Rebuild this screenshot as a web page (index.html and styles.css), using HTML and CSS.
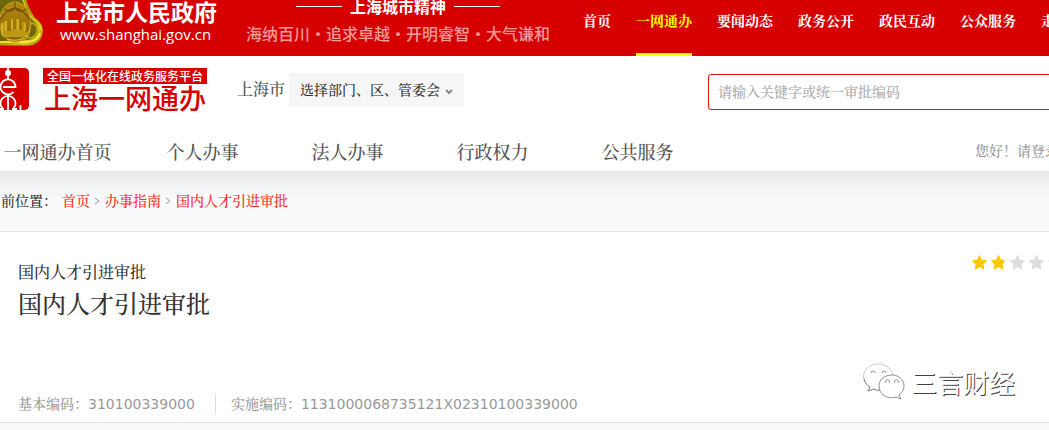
FILE: index.html
```html
<!DOCTYPE html>
<html lang="zh-CN">
<head>
<meta charset="utf-8">
<meta name="viewport" content="width=device-width, initial-scale=1">
<title>国内人才引进审批 - 上海一网通办</title>
<link rel="stylesheet" href="styles.css">
</head>
<body>
<header class="topbar">
  <svg class="emblem" viewBox="0 0 44 48" aria-hidden="true">
    <defs>
      <linearGradient id="gold" x1="0" y1="0" x2="1" y2="1"><stop offset="0" stop-color="#c8b00a"/><stop offset=".5" stop-color="#a88a08"/><stop offset=".8" stop-color="#d8c81c"/><stop offset="1" stop-color="#8d6f05"/></linearGradient>
      <linearGradient id="bronze" x1="0" y1="0" x2="0" y2="1"><stop offset="0" stop-color="#b58a10"/><stop offset="1" stop-color="#8e6404"/></linearGradient>
    </defs>
    <path d="M-5 -5 L25 -5 C27 3 31 12 35 18 C41 22 44 28 42.500 34 C41 41 36 45.500 28 45.500 L-5 45.500Z" fill="url(#gold)"/>
    <path d="M-2 -2 L21 -3 C24 5 28 14 33 21 C37 24 38 27 38 31 C37 36 33 39 28 40 L-2 41Z" fill="#6f6608"/>
    <path d="M23 -1 C25 7 29 15 34 20 C38 22 41 26 41 30" fill="none" stroke="#d9cb25" stroke-width="1.500"/>
    <path d="M19 42 C30 42 38 42 40 33" fill="none" stroke="#f4ec3a" stroke-width="2"/>
    <path d="M31 23 C29 29 31 35 24 40 M31 23 Q38 24 37 31 Q36 38 28 38" fill="none" stroke="#c4b01a" stroke-width="1.500"/>
    <path d="M-2 42 H19" stroke="#e8dc30" stroke-width="2"/>
    <ellipse cx="15" cy="22" rx="15.500" ry="20" fill="url(#bronze)" stroke="#c9a51a"/>
    <path d="M0 20 Q6 10 15 8 Q24 10 30 20 M4 9 Q10 14 15 8 Q20 14 26 9 M15 2V8" fill="none" stroke="#74550a" stroke-width="1.300"/>
    <path d="M1 35V23h3v-2h3v10h4V20l2-1v10h3V19h3v11h3V22h3v10h4v3Z" fill="#bd980e"/>
    <path d="M2 34V23M6 31V21M12 29V19M18 30V19M25 31V23M2 36H28M7 39Q16 42 24 38" fill="none" stroke="#e2ca38"/>
  </svg>
  <a class="gov" href="#"><span class="gov-name">上海市人民政府</span><span class="gov-url">www.shanghai.gov.cn</span></a>
  <div class="spirit">
    <div class="spirit-title">上海城市精神</div>
    <div class="spirit-text">海纳百川·追求卓越·开明睿智·大气谦和</div>
  </div>
  <nav class="site-nav">
    <a href="#">首页</a><a class="current" href="#">一网通办</a><a href="#">要闻动态</a><a href="#">政务公开</a><a href="#">政民互动</a><a href="#">公众服务</a><a href="#">走进上海</a>
  </nav>
</header>
<section class="masthead">
  <div class="tools">
    <a class="brand" href="#">
      <svg class="brand-mark" viewBox="0 0 29 42" aria-hidden="true">
        <path d="M-3 0H24Q29 0 29 5V37Q29 42 24 42H-3Z" fill="#d70000"/>
        <g fill="none" stroke="#fff" stroke-width="1.800">
          <path d="M8 0V11"/>
          <path d="M3 19H15.500A7.500 7.500 0 1 0 13.500 24"/>
          <path d="M3 41A7.500 7.500 0 1 1 13 41M8 27V42M-1 41H4M12 41H17M20.500 37V42"/>
        </g>
        <circle cx="8" cy="5" r="3" fill="#fff"/>
      </svg>
      <span class="brand-words"><span class="brand-tag">全国一体化在线政务服务平台</span><span class="brand-name">上海一网通办</span></span>
    </a>
    <label class="city" for="dept">上海市</label>
    <div class="picker">
      <select id="dept"><option>选择部门、区、管委会</option></select>
      <svg class="chevron" viewBox="0 0 8 6" aria-hidden="true"><path d="M1 1L4 4L7 1" fill="none" stroke="#888" stroke-width="2"/></svg>
    </div>
    <form class="search"><input type="text" aria-label="搜索" placeholder="请输入关键字或统一审批编码"></form>
  </div>
  <div class="menu-row">
    <nav class="menu"><a href="#">一网通办首页</a><a href="#">个人办事</a><a href="#">法人办事</a><a href="#">行政权力</a><a href="#">公共服务</a></nav>
    <a class="login" href="#">您好！请登录</a>
  </div>
</section>
<main>
  <nav class="crumbs" aria-label="当前位置">
    <span class="crumbs-label">前位置：</span>
    <a href="#">首页</a>
    <svg viewBox="0 0 6 8" aria-hidden="true"><path d="M1 1L5 4L1 7"/></svg>
    <a href="#">办事指南</a>
    <svg viewBox="0 0 6 8" aria-hidden="true"><path d="M1 1L5 4L1 7"/></svg>
    <a href="#">国内人才引进审批</a>
  </nav>
  <article class="card">
    <div class="card-head">
      <div>
        <p class="kind">国内人才引进审批</p>
        <h1>国内人才引进审批</h1>
      </div>
      <svg class="stars" viewBox="0 0 91 15" role="img" aria-label="评分">
        <defs>
          <path id="star" d="M7.500 1L9.500 5.300L14 5.900L10.700 9L11.600 13.700L7.500 11.500L3.400 13.700L4.300 9L1 5.900L5.500 5.300Z" stroke-width="1.400" stroke-linejoin="round"/>
          <clipPath id="part"><rect width="32" height="15"/></clipPath>
        </defs>
        <g fill="#ddd" stroke="#ddd"><use href="#star" x="19"/><use href="#star" x="38"/><use href="#star" x="57"/><use href="#star" x="76"/></g>
        <g fill="#ffc800" stroke="#ffc800" clip-path="url(#part)"><use href="#star"/><use href="#star" x="19"/></g>
      </svg>
    </div>
    <div class="codes">
      <span>基本编码：310100339000</span>
      <span>实施编码：1131000068735121X02310100339000</span>
    </div>
    <div class="watermark">
      <svg viewBox="0 0 42 38" aria-hidden="true">
        <g fill="#fff" stroke-width=".8">
          <path d="M5 28L7 24C-5 16 1 1 15 1C23 1 29 6 30 12C20 13 15 20 17 27Q14 28 11 26Z" stroke="#bbb"/>
          <path d="M1 16C2 20 4 22 7 24L5 28L11 26Q14 28 17 27" stroke="#666"/>
          <path d="M16 23C16 16 22 12 29 12C36 12 41 17 41 23C41 27 39 30 36 32L38 36L33 34C24 37 16 31 16 23Z" stroke="#777"/>
          <path d="M8 10a2 2 0 1 1 4 0M19 10a2 2 0 1 1 4 0M23 20a2 2 0 1 1 3 0M32 20a2 2 0 1 1 3 0" stroke="#777"/>
        </g>
      </svg>
      <span>三言财经</span>
    </div>
  </article>
</main>
</body>
</html>
```
FILE: styles.css
```css
* { box-sizing: border-box; }

body {
  margin: 0;
  overflow: hidden;
  background: #f8fafc;
  color: #333;
  font: 500 14px/20px "DejaVu Sans", "Songti SC", "Noto Serif CJK SC", "Noto Sans CJK SC", serif;
}

a { color: inherit; text-decoration: none; }
p, h1 { margin: 0; font-weight: 500; }

.topbar {
  display: flex;
  height: 56px;
  overflow: hidden;
  background: #d70000;
  color: #fff;
  white-space: nowrap;
}
.topbar > * { flex-shrink: 0; }

.emblem { width: 44px; height: 48px; }

.gov {
  display: flex;
  flex-direction: column;
  width: 190px;
  padding-left: 12px;
  font-family: "Noto Sans CJK SC", sans-serif;
}
.gov-name { font-size: 23px; font-weight: 700; line-height: 22px; }
.gov-url { font: 15px/20px "Open Sans", sans-serif; padding: 2px 0 0 4px; }

.spirit {
  width: 304px;
  margin-left: 12px;
  font: 500 16px/16px "Noto Sans CJK SC", sans-serif;
}
.spirit-title {
  display: flex;
  align-items: center;
  justify-content: center;
  gap: 8px;
  height: 12px;
  font-weight: 700;
}
.spirit-title::before, .spirit-title::after {
  content: "";
  width: 46px;
  height: 1px;
  background: #fff;
}
.spirit-text { margin-top: 13px; color: #f39a9a; }

.site-nav {
  display: flex;
  gap: 25px;
  margin-left: 33px;
  font-weight: 700;
}
.site-nav a { padding-top: 11px; }
.site-nav .current { color: #ff0; border-bottom: 3px solid #ff0; }

.masthead {
  background: #fff;
  white-space: nowrap;
}

.tools {
  display: flex;
  padding-top: 12px;
  height: 76px;
}
.tools > * { flex-shrink: 0; }

.brand { display: flex; gap: 14px; }
.brand-mark { width: 29px; height: 42px; }
.brand-words {
  display: flex;
  flex-direction: column;
  width: 164px;
  color: #d70000;
  font-family: "Noto Sans CJK SC", sans-serif;
}
.brand-tag {
  background: #d70000;
  color: #fff;
  font-size: 12px;
  font-weight: 500;
  line-height: 16px;
  text-align: center;
}
.brand-name { font-size: 27px; font-weight: 500; line-height: 28px; text-align: center; }

.city { margin-left: 30px; padding-top: 12px; color: #555; font-size: 16px; }

.picker {
  position: relative;
  margin: 5px 0 0 4px;
  width: 175px;
  height: 34px;
}
.picker select {
  appearance: none;
  width: 100%;
  height: 100%;
  padding: 0 11px;
  border: 0;
  background: #f6f6f6;
  color: #333;
  font: inherit;
}
.chevron {
  position: absolute;
  right: 11px;
  top: 16px;
  width: 8px;
  height: 6px;
  pointer-events: none;
}

.search { margin: 6px 0 0 244px; }
.search input {
  width: 400px;
  height: 36px;
  padding: 0 9px;
  border: 1px solid #e1140a;
  border-radius: 3px;
  font: inherit;
}
.search input::placeholder { color: #aaa; }

.menu-row {
  display: flex;
  justify-content: space-between;
  height: 39px;
}
.menu {
  display: grid;
  grid-template-columns: repeat(5, 145px);
  margin-left: -15px;
  padding-top: 9px;
  color: #555;
  font-size: 18px;
  line-height: 24px;
  text-align: center;
}
.login { margin-right: -10px; padding-top: 9px; color: #999; }

.crumbs {
  display: flex;
  align-items: center;
  height: 60px;
  padding-left: 1px;
  background: linear-gradient(#e7e8e9, #f1f2f4 12px, #f8fafc 28px);
  white-space: nowrap;
}
.crumbs-label { margin-right: 5px; }
.crumbs a { color: #ff2d1c; }
.crumbs svg { width: 6px; height: 8px; margin: 0 5px 0 4px; }
.crumbs path { fill: none; stroke: #999; }

.card {
  position: relative;
  padding: 31px 0 8px 18px;
  border: solid #e1e4e7;
  border-width: 1px 0;
  background: #fff;
}
.card-head {
  display: flex;
  justify-content: space-between;
  height: 131px;
}
.kind { font-size: 16px; }
h1 { margin-top: 6px; font-size: 24px; line-height: 32px; }
.stars { width: 91px; height: 15px; margin: -8px -14px 0 0; }

.codes { display: flex; color: #999; white-space: nowrap; }
.codes span + span {
  margin-left: 20px;
  padding-left: 15px;
  border-left: 1px solid #ddd;
}

.watermark {
  position: absolute;
  right: 34px;
  bottom: 20px;
  display: flex;
  align-items: center;
  gap: 6px;
  color: #fff;
  font: 26px/40px "Noto Sans CJK SC", sans-serif;
  text-shadow: 1px 1px 0 #444;
}
.watermark svg { width: 42px; height: 38px; }
```
